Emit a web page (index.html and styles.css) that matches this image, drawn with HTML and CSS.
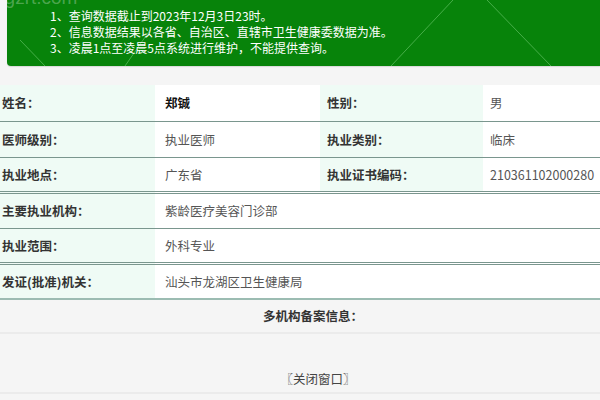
FILE: index.html
```html
<!DOCTYPE html>
<html lang="zh-CN">
<head>
<meta charset="utf-8">
<title>医师执业信息查询</title>
<link rel="stylesheet" href="styles.css">
</head>
<body>
<div class="page">
  <div class="notice">
    <span class="watermark">ngzrt.com</span>
    <svg class="wm-lines" width="600" height="66" viewBox="0 0 600 66" aria-hidden="true">
      <line x1="453" y1="0" x2="391" y2="66" />
      <line x1="487" y1="0" x2="551" y2="66" />
      <line x1="20" y1="40" x2="45" y2="66" />
      <line x1="150" y1="30" x2="125" y2="66" />
    </svg>
    <ol class="notice-list">
      <li>1、查询数据截止到2023年12月3日23时。</li>
      <li>2、信息数据结果以各省、自治区、直辖市卫生健康委数据为准。</li>
      <li>3、凌晨1点至凌晨5点系统进行维护，不能提供查询。</li>
    </ol>
  </div>

  <div class="sheet">
    <table class="info">
      <colgroup>
        <col class="c1"><col class="c2"><col class="c3"><col class="c4">
      </colgroup>
      <tr>
        <th>姓名：</th><td class="v2 strong">郑铖</td>
        <th class="l3">性别：</th><td>男</td>
      </tr>
      <tr>
        <th>医师级别：</th><td class="v2">执业医师</td>
        <th class="l3">执业类别：</th><td>临床</td>
      </tr>
      <tr class="dbl">
        <th>执业地点：</th><td class="v2">广东省</td>
        <th class="l3">执业证书编码：</th><td>210361102000280</td>
      </tr>
      <tr>
        <th>主要执业机构：</th><td class="v2" colspan="3">紫龄医疗美容门诊部</td>
      </tr>
      <tr class="dbl">
        <th>执业范围：</th><td class="v2" colspan="3">外科专业</td>
      </tr>
      <tr class="last">
        <th>发证(批准)机关：</th><td class="v2" colspan="3">汕头市龙湖区卫生健康局</td>
      </tr>
    </table>

    <div class="multi">多机构备案信息：</div>
    <div class="close"><a class="close-link">〖关闭窗口〗</a></div>
  </div>
</div>
</body>
</html>
```

FILE: styles.css
```css
html, body {
  margin: 0;
  padding: 0;
  background: #f5f5f5;
  overflow: hidden;
}

body {
  font-family: "Noto Sans CJK SC", "Noto Sans", sans-serif;
  font-size: 12.5px;
  color: #555;
}

.page {
  width: 600px;
  height: 400px;
  overflow: hidden;
}

.notice {
  position: relative;
  margin-left: 7px;
  height: 66px;
  box-sizing: border-box;
  padding: 8px 0 0 43px;
  background: #07830a;
  border-bottom-left-radius: 4px;
  box-shadow: 0 1px 1px rgba(0, 0, 0, 0.12);
  color: #fff;
  overflow: hidden;
}

.watermark {
  position: absolute;
  left: -13px;
  top: -12px;
  font-family: "Liberation Sans", sans-serif;
  font-size: 19px;
  line-height: 20px;
  color: rgba(255, 255, 255, 0.28);
}

.wm-lines {
  position: absolute;
  left: -7px;
  top: 0;
}

.wm-lines line {
  stroke: rgba(190, 255, 190, 0.35);
  stroke-width: 1;
}

.notice-list {
  position: relative;
  list-style: none;
  margin: 0;
  padding: 0;
  font-size: 12px;
  line-height: 16px;
}

.notice-list li {
  height: 16px;
}

.sheet {
  width: 636px;
  margin-left: -5px;
  margin-top: 19px;
}

.info {
  width: 100%;
  border-collapse: collapse;
  table-layout: fixed;
}

.c1 { width: 160px; }
.c2 { width: 165px; }
.c3 { width: 163px; }

.info tr {
  height: 36px;
  border-bottom: 1px solid #7a968e;
}

.info tr.dbl {
  height: 35px;
  border-bottom: 3px double #7a968e;
}

.info tr.last {
  border-bottom: 2px solid #9cbcb2;
}

.info th,
.info td {
  padding: 0 0 0 7px;
  text-align: left;
  vertical-align: middle;
  white-space: nowrap;
}

.info th {
  background: #effbf5;
  color: #333;
  font-weight: bold;
}

.info td {
  background: #fff;
  color: #555;
}

.info td.v2 {
  padding-left: 10px;
}

.info td.strong {
  color: #111;
  font-weight: bold;
}

.multi {
  height: 32px;
  line-height: 32px;
  text-align: center;
  font-weight: bold;
  color: #333;
  border-bottom: 2px solid #ebebeb;
}

.close {
  height: 60px;
  box-sizing: border-box;
  padding-top: 35px;
  text-align: center;
  border-bottom: 2px solid #ebebeb;
}

.close-link {
  display: inline-block;
  padding-left: 10px;
  color: #444;
  line-height: 16px;
}
```
